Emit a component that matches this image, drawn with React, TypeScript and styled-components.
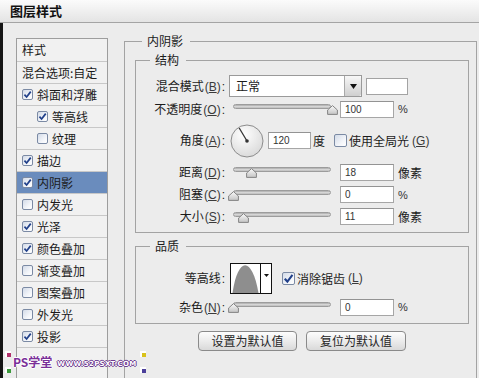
import React from "react";
import styled, { createGlobalStyle } from "styled-components";

const GlobalStyle = createGlobalStyle`
  html, body {
    margin: 0;
    padding: 0;
    background: #ececec;
  }
  body {
    font-family: "Noto Sans CJK SC", "DejaVu Sans", sans-serif;
    font-size: 12px;
    color: #1b1b1b;
  }
`;

const Window = styled.div`
  position: relative;
  width: 479px;
  height: 378px;
  overflow: hidden;
  background: #ececec;
  display: flex;
  flex-direction: column;
`;

const TitleBar = styled.div`
  flex: none;
  height: 23px;
  box-sizing: border-box;
  padding-left: 10px;
  border-bottom: 1px solid #a4a4a4;
  background: linear-gradient(#fbfbfb, #e4e4e4);
  font-weight: 700;
  font-size: 13px;
  line-height: 22px;
  color: #111;
`;

const Body = styled.div`
  flex: 1;
  min-height: 0;
  display: flex;
  align-items: flex-start;
  border-left: 3px solid #151515;
`;

// left column: list of effects
const StyleList = styled.ul`
  flex: none;
  list-style: none;
  margin: 15px 0 0 13px;
  padding: 0;
  width: 92px;
  height: 360px;
  box-sizing: border-box;
  border: 1px solid #9d9d9d;
  background: #f1f1f1;
`;

const ListItem = styled.li<{ $h?: number; $indent?: boolean; $selected?: boolean }>`
  display: flex;
  align-items: center;
  gap: 4px;
  box-sizing: border-box;
  height: ${(p) => p.$h ?? 22}px;
  padding-left: ${(p) => (p.$indent ? 20 : 5)}px;
  border-bottom: 1px solid #c8c8c8;
  background: ${(p) => (p.$selected ? "#6a8cbd" : "transparent")};
  font-size: 12px;
  line-height: 16px;
  white-space: nowrap;
`;

const Box = styled.span<{ $size: number }>`
  flex: none;
  display: inline-flex;
  align-items: center;
  justify-content: center;
  width: ${(p) => p.$size}px;
  height: ${(p) => p.$size}px;
  box-sizing: border-box;
  border: 1px solid #7b8aa4;
  border-radius: 2px;
  background: linear-gradient(135deg, #d3dbe8 0%, #f4f6fa 65%, #ffffff 100%);
`;

const CheckBox = ({ checked, size = 11 }: { checked?: boolean; size?: number }) => (
  <Box $size={size}>
    {checked && (
      <svg width={size - 2} height={size - 2} viewBox="0 0 10 10">
        <path d="M1.6 5.2 L4 7.8 L8.6 1.8" fill="none" stroke="#21408a" strokeWidth="1.9" />
      </svg>
    )}
  </Box>
);

// right column
const Main = styled.div`
  flex: none;
  margin: 10px 0 0 16px;
`;

const Group = styled.fieldset<{ $w: number; $h?: number; $mt?: number }>`
  margin: ${(p) => p.$mt ?? 0}px 0 0 0;
  padding: 0;
  min-width: 0;
  width: ${(p) => p.$w}px;
  ${(p) => (p.$h ? `height: ${p.$h}px;` : "")}
  box-sizing: border-box;
  border: 1px solid #a3a3a3;
`;

const Legend = styled.legend<{ $ml: number }>`
  margin-left: ${(p) => p.$ml}px;
  padding: 0 7px 0 5px;
  height: 16px;
  line-height: 16px;
  font-size: 12px;
  color: #1b1b1b;
`;

const GroupBody = styled.div<{ $pad: string }>`
  padding: ${(p) => p.$pad};
`;

const Form = styled.div<{ $rows: string; $gap: number }>`
  display: grid;
  grid-template-columns: 92px auto;
  grid-template-rows: ${(p) => p.$rows};
  row-gap: ${(p) => p.$gap}px;
  align-items: center;
`;

const Label = styled.div`
  text-align: right;
  padding-right: 3px;
  white-space: nowrap;
  font-size: 12px;
  line-height: 16px;
`;

const Mn = styled.span`
  font-family: "Liberation Sans", Arial, sans-serif;
  font-size: 12px;
  color: #3a3a3a;
  margin-left: 1px;
`;

const Colon = styled.span`
  font-family: "Liberation Sans", Arial, sans-serif;
  margin-left: 1px;
`;

const Lbl = ({ t, k }: { t: string; k?: string }) => (
  <Label>
    {t}
    {k && (
      <Mn>
        (<u>{k}</u>)
      </Mn>
    )}
    <Colon>:</Colon>
  </Label>
);

const Controls = styled.div`
  display: flex;
  align-items: center;
  height: 100%;
`;

const Select = styled.div`
  display: flex;
  width: 133px;
  height: 22px;
  margin-left: 1px;
  box-sizing: border-box;
  border: 1px solid #9a9a9a;
  background: #fff;
`;

const SelectText = styled.span`
  flex: 1;
  padding-left: 6px;
  line-height: 20px;
  font-size: 12px;
`;

const SelectArrow = styled.span`
  width: 16px;
  display: flex;
  align-items: center;
  justify-content: center;
  border-left: 1px solid #a9a9a9;
  border-radius: 0 2px 2px 0;
  background: linear-gradient(#f7f7f7, #cfcfcf);
`;

const Swatch = styled.div`
  width: 42px;
  height: 17px;
  margin-left: 4px;
  box-sizing: border-box;
  border: 1px solid #a3a3a3;
  background: #fff;
`;

const SliderBox = styled.div`
  position: relative;
  flex: none;
  width: 107px;
  height: 16px;
`;

const Track = styled.div`
  position: absolute;
  left: 5px;
  top: 3px;
  width: 98px;
  height: 5px;
  box-sizing: border-box;
  border: 1px solid #9c9c9c;
  border-radius: 3px;
  background: linear-gradient(#a9a9a9, #dadada 55%, #b9b9b9);
`;

const Knob = styled.svg`
  position: absolute;
  top: 4px;
`;

const Slider = ({ pos }: { pos: number }) => (
  <SliderBox>
    <Track />
    <Knob width="11" height="10" viewBox="0 0 11 10" style={{ left: pos }}>
      <defs>
        <linearGradient id={`kg${pos}`} x1="0" y1="0" x2="0" y2="1">
          <stop offset="0" stopColor="#fafafa" />
          <stop offset="1" stopColor="#c4c4c4" />
        </linearGradient>
      </defs>
      <path d="M5.5 0.6 L10.4 5 L10.4 9.4 L0.6 9.4 L0.6 5 Z" fill={`url(#kg${pos})`} stroke="#858585" strokeWidth="1" />
    </Knob>
  </SliderBox>
);

const Input = styled.div<{ $w?: number; $ml?: number }>`
  flex: none;
  width: ${(p) => p.$w ?? 54}px;
  height: 17px;
  margin-left: ${(p) => p.$ml ?? 5}px;
  box-sizing: border-box;
  border: 1px solid #a6a6a6;
  border-top-color: #939393;
  background: #fff;
  padding-left: 4px;
  font-family: "Liberation Sans", Arial, sans-serif;
  font-size: 10px;
  line-height: 15px;
  color: #333;
`;

const Unit = styled.span<{ $latin?: boolean; $ml?: number }>`
  margin-left: ${(p) => p.$ml ?? 4}px;
  font-size: ${(p) => (p.$latin ? 11 : 12)}px;
  ${(p) => (p.$latin ? `font-family: "Liberation Sans", Arial, sans-serif; color: #333;` : "")}
  white-space: nowrap;
`;

const CheckLabel = styled.span<{ $ml: number }>`
  display: flex;
  align-items: center;
  gap: 2px;
  margin-left: ${(p) => p.$ml}px;
  white-space: nowrap;
  font-size: 12px;
`;

const Dial = styled.svg`
  flex: none;
  margin-left: 2px;
`;

const Contour = styled.div`
  display: flex;
  width: 42px;
  height: 31px;
  margin-left: 2px;
  box-sizing: border-box;
  border: 1px solid #111;
  background: #fff;
`;

const ContourArrow = styled.span`
  flex: 1;
  display: flex;
  justify-content: center;
  padding-top: 10px;
  border-left: 1px solid #111;
`;

const Buttons = styled.div`
  display: flex;
  justify-content: center;
  gap: 9px;
  margin-top: 7px;
`;

const Button = styled.div<{ $w: number }>`
  width: ${(p) => p.$w}px;
  height: 20px;
  box-sizing: border-box;
  border: 1px solid #8a8a8a;
  border-radius: 4px;
  background: linear-gradient(#fdfdfd, #ececec 50%, #d9d9d9);
  text-align: center;
  font-size: 12px;
  line-height: 18px;
  color: #262626;
`;

// watermark over the bottom left corner
const Watermark = styled.div`
  position: absolute;
  left: 5px;
  top: 351px;
  width: 141px;
  height: 22px;
  display: flex;
  align-items: center;
  gap: 5px;
  padding-left: 8px;
  box-sizing: border-box;
  white-space: nowrap;
`;

const Mark = styled.span<{ $c: string; $pos: string }>`
  position: absolute;
  width: 6px;
  height: 6px;
  ${(p) => p.$pos}
  background: ${(p) => p.$c};
  box-shadow: inset 2px 2px 0 #fff;
`;

const WmTitle = styled.span`
  flex: none;
  font-family: "Noto Sans CJK SC", sans-serif;
  font-weight: 700;
  font-size: 12px;
  line-height: 14px;
  color: #7a2f98;
  text-shadow: 1px 0 0 #fff, -1px 0 0 #fff, 0 1px 0 #fff, 0 -1px 0 #fff;
`;

const WmUrl = styled.span`
  flex: none;
  font-family: "DejaVu Sans", sans-serif;
  font-weight: 700;
  font-size: 7px;
  line-height: 9px;
  margin-top: 4px;
  color: #fff;
  letter-spacing: 0.3px;
  text-shadow: 1px 0 0 #6d3a8f, -1px 0 0 #6d3a8f, 0 1px 0 #6d3a8f, 0 -1px 0 #6d3a8f;
`;

const Arrow = () => (
  <svg width="7" height="5" viewBox="0 0 7 5">
    <path d="M0 0 H7 L3.5 5 Z" fill="#111" />
  </svg>
);

const effects: { name: string; checked: boolean; indent?: boolean; selected?: boolean }[] = [
  { name: "斜面和浮雕", checked: true },
  { name: "等高线", checked: true, indent: true },
  { name: "纹理", checked: false, indent: true },
  { name: "描边", checked: true },
  { name: "内阴影", checked: true, selected: true },
  { name: "内发光", checked: false },
  { name: "光泽", checked: true },
  { name: "颜色叠加", checked: true },
  { name: "渐变叠加", checked: false },
  { name: "图案叠加", checked: false },
  { name: "外发光", checked: false },
  { name: "投影", checked: true },
];

export default function App() {
  return (
    <Window>
      <GlobalStyle />
      <TitleBar>图层样式</TitleBar>
      <Body>
        <StyleList>
          <ListItem $h={23}>样式</ListItem>
          <ListItem>混合选项:自定</ListItem>
          {effects.map((e) => (
            <ListItem key={e.name} $indent={e.indent} $selected={e.selected}>
              <CheckBox checked={e.checked} />
              {e.name}
            </ListItem>
          ))}
        </StyleList>

        <Main>
          <Group $w={353} $h={360}>
            <Legend $ml={17}>内阴影</Legend>
            <GroupBody $pad="3px 7px 0 10px">
              <Group $w={334}>
                <Legend $ml={14}>结构</Legend>
                <GroupBody $pad="7px 0 5px 0">
                  <Form $rows="22px 22px 39px 22px 21px 21px" $gap={1}>
                    <Lbl t="混合模式" k="B" />
                    <Controls>
                      <Select>
                        <SelectText>正常</SelectText>
                        <SelectArrow>
                          <Arrow />
                        </SelectArrow>
                      </Select>
                      <Swatch />
                    </Controls>

                    <Lbl t="不透明度" k="O" />
                    <Controls>
                      <Slider pos={99} />
                      <Input>100</Input>
                      <Unit $latin>%</Unit>
                    </Controls>

                    <Lbl t="角度" k="A" />
                    <Controls>
                      <Dial width="34" height="34" viewBox="0 0 34 34">
                        <defs>
                          <radialGradient id="dialFill" cx="0.4" cy="0.3" r="0.8">
                            <stop offset="0" stopColor="#ffffff" />
                            <stop offset="1" stopColor="#d6d6d6" />
                          </radialGradient>
                        </defs>
                        <circle cx="17" cy="17" r="16" fill="url(#dialFill)" stroke="#8c8c8c" strokeWidth="1" />
                        <line x1="17" y1="17" x2="9.2" y2="4" stroke="#333" strokeWidth="1.3" />
                        <circle cx="17" cy="17" r="1.8" fill="#333" />
                      </Dial>
                      <Input $w={43} $ml={4}>120</Input>
                      <Unit $ml={2}>度</Unit>
                      <CheckLabel $ml={9}>
                        <CheckBox size={13} />
                        使用全局光
                        <Mn>
                          (<u>G</u>)
                        </Mn>
                      </CheckLabel>
                    </Controls>

                    <Lbl t="距离" k="D" />
                    <Controls>
                      <Slider pos={18} />
                      <Input>18</Input>
                      <Unit>像素</Unit>
                    </Controls>

                    <Lbl t="阻塞" k="C" />
                    <Controls>
                      <Slider pos={0} />
                      <Input>0</Input>
                      <Unit $latin>%</Unit>
                    </Controls>

                    <Lbl t="大小" k="S" />
                    <Controls>
                      <Slider pos={10} />
                      <Input>11</Input>
                      <Unit>像素</Unit>
                    </Controls>
                  </Form>
                </GroupBody>
              </Group>

              <Group $w={334} $mt={5}>
                <Legend $ml={14}>品质</Legend>
                <GroupBody $pad="8px 0 5px 0">
                  <Form $rows="32px 22px" $gap={2}>
                    <Lbl t="等高线" />
                    <Controls>
                      <Contour>
                        <svg width="29" height="29" viewBox="0 0 29 29">
                          <path d="M1.5 29 C 7 -8, 21 -8, 27.5 29 Z" fill="#8e8e8e" />
                        </svg>
                        <ContourArrow>
                          <svg width="5" height="3" viewBox="0 0 5 3">
                            <path d="M0 0 H5 L2.5 3 Z" fill="#111" />
                          </svg>
                        </ContourArrow>
                      </Contour>
                      <CheckLabel $ml={10}>
                        <CheckBox checked size={13} />
                        消除锯齿
                        <Mn>
                          (<u>L</u>)
                        </Mn>
                      </CheckLabel>
                    </Controls>

                    <Lbl t="杂色" k="N" />
                    <Controls>
                      <Slider pos={0} />
                      <Input>0</Input>
                      <Unit $latin>%</Unit>
                    </Controls>
                  </Form>
                </GroupBody>
              </Group>

              <Buttons>
                <Button $w={99}>设置为默认值</Button>
                <Button $w={100}>复位为默认值</Button>
              </Buttons>
            </GroupBody>
          </Group>
        </Main>
      </Body>

      <Watermark>
        <Mark $c="#b0306a" $pos="left: 0; top: 0;" />
        <Mark $c="#3c9a3c" $pos="left: 0; bottom: 0;" />
        <Mark $c="#d9c21c" $pos="right: 0; top: 0;" />
        <Mark $c="#4b3f9a" $pos="right: 0; bottom: 0;" />
        <WmTitle>PS学堂</WmTitle>
        <WmUrl>WWW.52PSXT.COM</WmUrl>
      </Watermark>
    </Window>
  );
}
